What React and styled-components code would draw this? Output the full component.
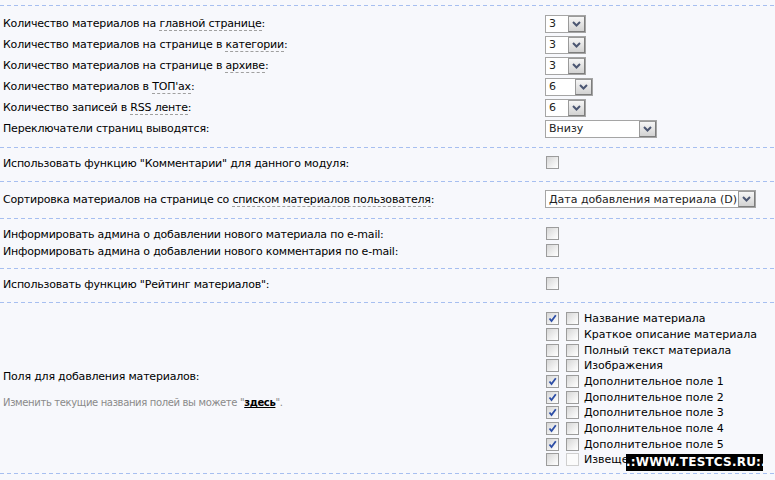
import React from 'react';
import styled, { createGlobalStyle, css } from 'styled-components';

const GlobalStyle = createGlobalStyle`
  html, body {
    margin: 0;
    padding: 0;
    background: #f7f8fc;
  }
  body {
    font-family: "DejaVu Sans", Verdana, sans-serif;
    font-size: 11px;
    color: #000;
  }
`;

const Page = styled.div`
  position: relative;
  width: 775px;
  height: 480px;
  overflow: hidden;
  padding-top: 4px;
  box-sizing: border-box;
`;

const dash = 'linear-gradient(to right, #a7bff0 4px, transparent 4px)';

const Section = styled.div`
  padding: 8px 0 ${p => p.$bottom || 8}px;
  background-image: ${dash};
  background-size: 7px 1px;
  background-repeat: repeat-x;
  background-position: 0 0;
  border-top: 1px solid transparent;
  ${p =>
    p.$last &&
    css`
      border-bottom: 1px solid transparent;
      background-image: ${dash}, ${dash};
      background-position: 0 0, 0 100%;
      background-origin: border-box;
    `}
`;

const Row = styled.div`
  display: grid;
  grid-template-columns: 542px 1fr;
  align-items: center;
  padding-left: 3px;
  min-height: ${p => p.$h || 17}px;
`;

const Label = styled.div`
  white-space: nowrap;
  letter-spacing: -0.2px;
`;

const Term = styled.span`
  border-bottom: 1px dashed #a0a0a0;
`;

const Hint = styled.div`
  margin-top: 14px;
  color: #8a8a8a;
  font-size: 10px;
  letter-spacing: -0.35px;
  white-space: nowrap;
  a {
    color: #000;
    font-weight: bold;
    text-decoration: underline;
  }
`;

const SelectBox = styled.div`
  display: flex;
  align-items: center;
  justify-content: space-between;
  width: ${p => p.$w}px;
  height: 18px;
  box-sizing: border-box;
  border: 1px solid #a5a5a5;
  background: #fff;
  font-size: 11px;
  color: #222;
`;

const SelectValue = styled.span`
  padding-left: 3px;
  white-space: nowrap;
`;

const DropButton = styled.span`
  display: flex;
  align-items: center;
  justify-content: center;
  width: 17px;
  height: 16px;
  box-sizing: border-box;
  border: 1px solid #7d7d7d;
  border-top-color: #9a9a9a;
  border-left-color: #9a9a9a;
  background: linear-gradient(#f6f6f6, #d2d2d2);
`;

const Box = styled.span`
  display: inline-flex;
  align-items: center;
  justify-content: center;
  width: 13px;
  height: 13px;
  box-sizing: border-box;
  margin-left: 1px;
  border: 1px solid ${p => (p.$disabled ? '#cfcfcf' : '#9c9c9c')};
  background: ${p =>
    p.$disabled
      ? '#fbfbfb'
      : 'linear-gradient(135deg, #d6d6d6, #f4f4f4 70%, #fff)'};
`;

const FieldList = styled.div`
  display: flex;
  flex-direction: column;
`;

const FieldItem = styled.div`
  display: flex;
  align-items: center;
  height: 15.67px;
  font-size: 11px;
  white-space: nowrap;
  ${Box} + ${Box} {
    margin-left: 7px;
  }
`;

const FieldName = styled.span`
  margin-left: 5px;
`;

const Watermark = styled.div`
  position: absolute;
  left: 626px;
  top: 454px;
  width: 137px;
  height: 17px;
  background: #000;
  color: #fff;
  font-family: "DejaVu Sans", sans-serif;
  font-weight: bold;
  font-size: 12px;
  line-height: 17px;
  text-align: center;
  letter-spacing: 0.2px;
`;

const Chevron = () => (
  <svg width="9" height="6" viewBox="0 0 9 6">
    <path d="M1 1 L4.5 4.5 L8 1" fill="none" stroke="#4b5672" strokeWidth="2" />
  </svg>
);

const Select = ({ value, width }) => (
  <SelectBox $w={width}>
    <SelectValue>{value}</SelectValue>
    <DropButton>
      <Chevron />
    </DropButton>
  </SelectBox>
);

const Checkbox = ({ checked, disabled }) => (
  <Box $disabled={disabled}>
    {checked && (
      <svg width="9" height="9" viewBox="0 0 9 9">
        <path d="M1.5 4.5 L3.5 7 L7.8 1.2" fill="none" stroke="#2d4ea6" strokeWidth="1.8" />
      </svg>
    )}
  </Box>
);

const fields = [
  ['Название материала', true],
  ['Краткое описание материала', false],
  ['Полный текст материала', false],
  ['Изображения', false],
  ['Дополнительное поле 1', true],
  ['Дополнительное поле 2', true],
  ['Дополнительное поле 3', true],
  ['Дополнительное поле 4', true],
  ['Дополнительное поле 5', true],
  ['Извещения о комментариях', false, true],
];

export default function App() {
  return (
    <Page>
      <GlobalStyle />
      <Section $bottom={7}>
        <Row $h={21}>
          <Label>Количество материалов на <Term>главной странице</Term>:</Label>
          <Select value="3" width={41} />
        </Row>
        <Row $h={21}>
          <Label>Количество материалов на странице в <Term>категории</Term>:</Label>
          <Select value="3" width={41} />
        </Row>
        <Row $h={21}>
          <Label>Количество материалов на странице в <Term>архиве</Term>:</Label>
          <Select value="3" width={41} />
        </Row>
        <Row $h={21}>
          <Label>Количество материалов в <Term>ТОП'ах</Term>:</Label>
          <Select value="6" width={48} />
        </Row>
        <Row $h={21}>
          <Label>Количество записей в <Term>RSS ленте</Term>:</Label>
          <Select value="6" width={41} />
        </Row>
        <Row $h={21}>
          <Label>Переключатели страниц выводятся:</Label>
          <Select value="Внизу" width={112} />
        </Row>
      </Section>

      <Section>
        <Row>
          <Label>Использовать функцию "Комментарии" для данного модуля:</Label>
          <div><Checkbox /></div>
        </Row>
      </Section>

      <Section>
        <Row $h={20}>
          <Label>Сортировка материалов на странице со <Term>списком материалов пользователя</Term>:</Label>
          <Select value="Дата добавления материала (D)" width={211} />
        </Row>
      </Section>

      <Section $bottom={7}>
        <Row>
          <Label>Информировать админа о добавлении нового материала по e-mail:</Label>
          <div><Checkbox /></div>
        </Row>
        <Row>
          <Label>Информировать админа о добавлении нового комментария по e-mail:</Label>
          <div><Checkbox /></div>
        </Row>
      </Section>

      <Section $bottom={9}>
        <Row>
          <Label>Использовать функцию "Рейтинг материалов":</Label>
          <div><Checkbox /></div>
        </Row>
      </Section>

      <Section $bottom={5} $last>
        <Row>
          <div>
            <Label>Поля для добавления материалов:</Label>
            <Hint>
              Изменить текущие названия полей вы можете "<a href="#">здесь</a>".
            </Hint>
          </div>
          <FieldList>
            {fields.map(([name, checked, disabled]) => (
              <FieldItem key={name}>
                <Checkbox checked={checked} />
                <Checkbox disabled={disabled} />
                <FieldName>{name}</FieldName>
              </FieldItem>
            ))}
          </FieldList>
        </Row>
      </Section>

      <Watermark>.:WWW.TESTCS.RU:.</Watermark>
    </Page>
  );
}
